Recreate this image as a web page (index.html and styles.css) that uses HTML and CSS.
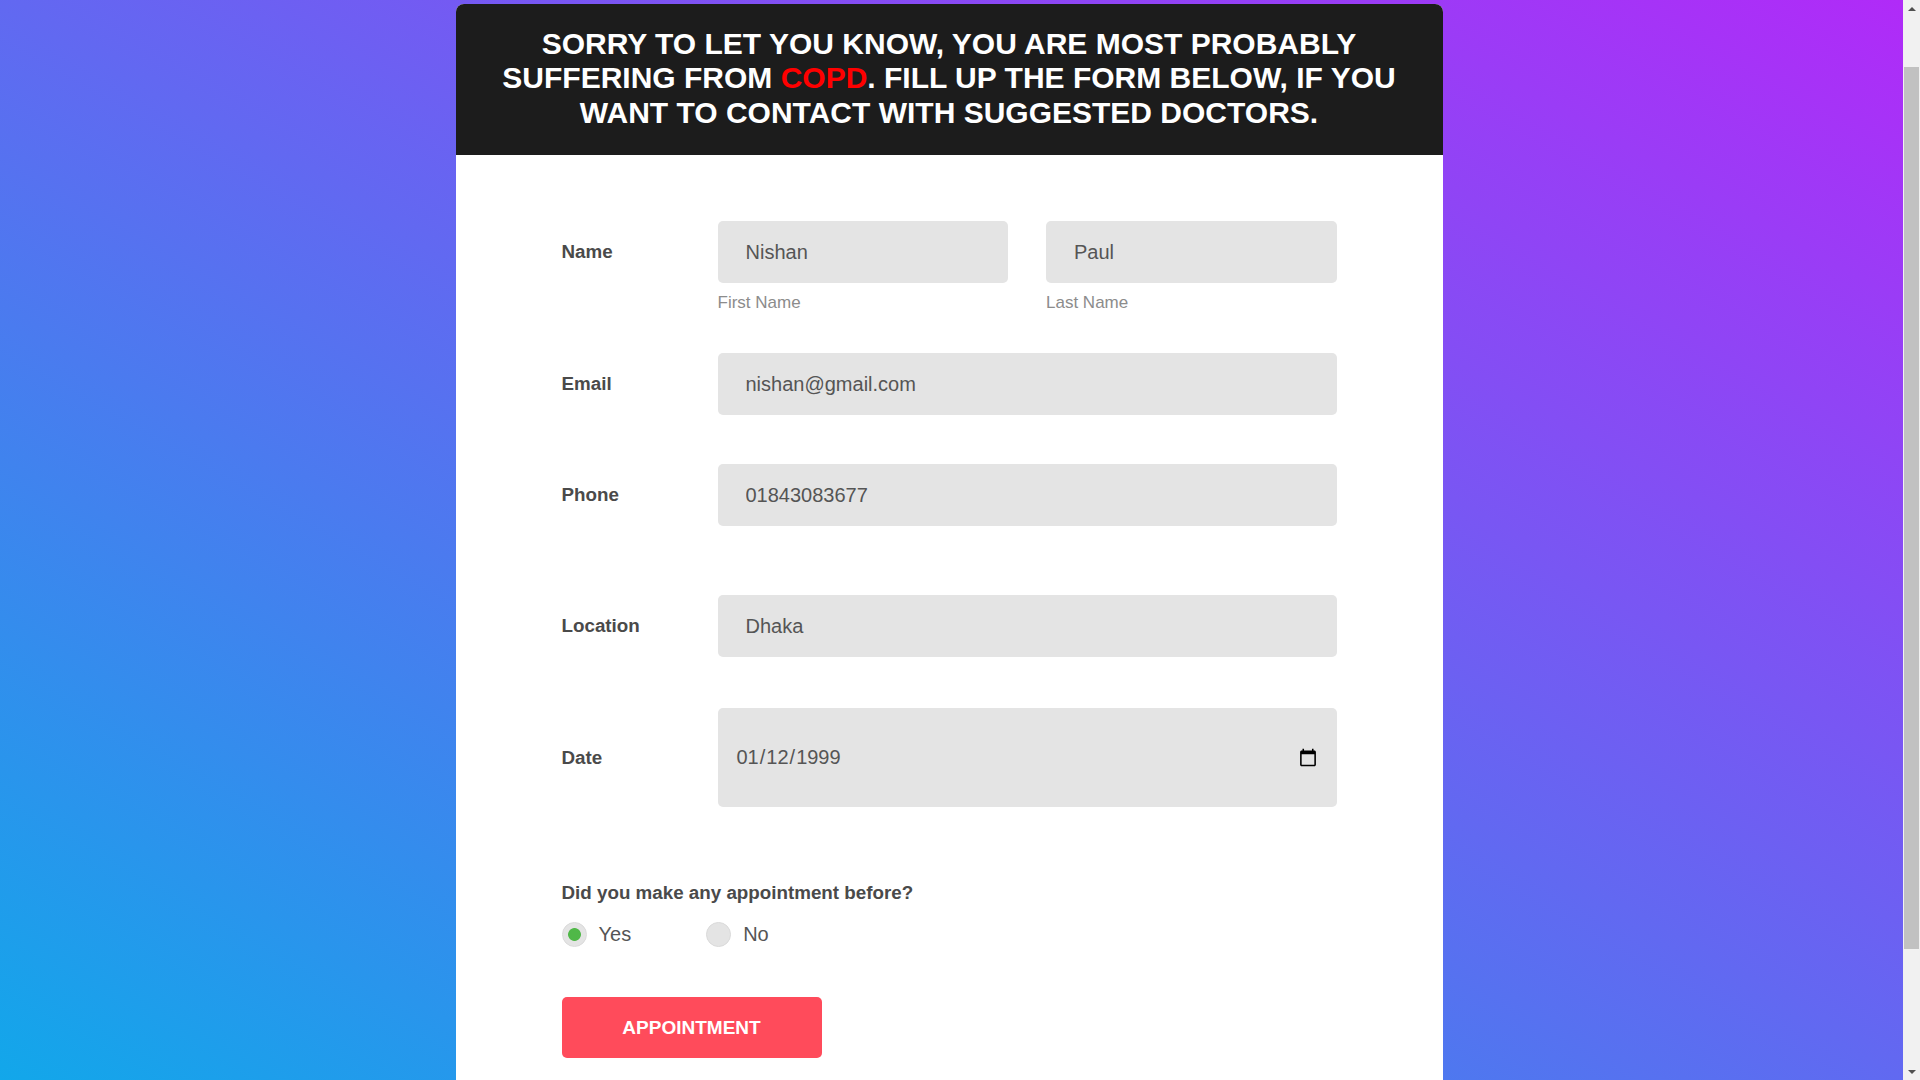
FILE: index.html
```html
<!DOCTYPE html>
<html lang="en">
<head>
<meta charset="utf-8">
<title>Appointment</title>
<link rel="stylesheet" href="styles.css">
</head>
<body>
<div class="card">
  <div class="banner">
    SORRY TO LET YOU KNOW, YOU ARE MOST PROBABLY<br>
    SUFFERING FROM <span class="disease">COPD</span>. FILL UP THE FORM BELOW, IF YOU<br>
    WANT TO CONTACT WITH SUGGESTED DOCTORS.
  </div>
  <form class="form">
    <div class="row row-top row-name">
      <label class="label">Name</label>
      <div class="fields">
        <div class="field">
          <input class="input" type="text" value="Nishan">
          <div class="hint">First Name</div>
        </div>
        <div class="field">
          <input class="input" type="text" value="Paul">
          <div class="hint">Last Name</div>
        </div>
      </div>
    </div>
    <div class="row row-email">
      <label class="label">Email</label>
      <div class="fields"><input class="input" type="text" value="nishan@gmail.com"></div>
    </div>
    <div class="row row-phone">
      <label class="label">Phone</label>
      <div class="fields"><input class="input" type="text" value="01843083677"></div>
    </div>
    <div class="row row-location">
      <label class="label">Location</label>
      <div class="fields"><input class="input" type="text" value="Dhaka"></div>
    </div>
    <div class="row row-date">
      <label class="label">Date</label>
      <div class="fields"><input class="input input-date" type="date" value="1999-01-12"></div>
    </div>
    <div class="question">Did you make any appointment before?</div>
    <div class="choices">
      <label class="choice"><input class="radio" type="radio" name="before" checked><span>Yes</span></label>
      <label class="choice"><input class="radio" type="radio" name="before"><span>No</span></label>
    </div>
    <button class="btn" type="button">APPOINTMENT</button>
  </form>
</div>
<div class="scrollbar" aria-hidden="true">
  <div class="sb-btn"><span class="arrow-up"></span></div>
  <div class="sb-track"><div class="sb-thumb"></div></div>
  <div class="sb-btn"><span class="arrow-down"></span></div>
</div>
</body>
</html>
```
FILE: styles.css
```css
html {
  min-height: 100%;
  background: linear-gradient(to top right, #12a7ea, #b12af8) fixed;
}
body {
  margin: 0 22px 0 0;
  padding: 4px 0 43px;
  font-family: "Liberation Sans", Arial, sans-serif;
}
.card {
  width: 987px;
  margin: 0 auto;
  background: #fff;
  border-radius: 8px 8px 0 0;
  overflow: hidden;
}
.banner {
  background: #1c1c1c;
  color: #fff;
  text-align: center;
  font-weight: bold;
  font-size: 30px;
  line-height: 34.4px;
  padding: 23px 10px 25px;
}
.disease {
  color: #ff0000;
}
.form {
  padding: 66px 106px 180px 106px;
}
.row {
  display: flex;
  align-items: center;
}
.row-top {
  align-items: flex-start;
}
.row-name { margin-bottom: 40px; }
.row-email { margin-bottom: 49px; }
.row-phone { margin-bottom: 69px; }
.row-location { margin-bottom: 51px; }
.row-date { margin-bottom: 75px; }
.label {
  width: 156px;
  flex: none;
  font-size: 18.8px;
  font-weight: bold;
  color: #4a4a4a;
}
.row-top .label {
  height: 62px;
  line-height: 62px;
}
.fields {
  flex: 1;
  display: flex;
  gap: 38px;
}
.field {
  flex: 1;
}
.input {
  display: block;
  width: 100%;
  box-sizing: border-box;
  height: 62px;
  border: none;
  border-radius: 5px;
  background: #e4e4e4;
  padding: 0 28px;
  font-family: "Liberation Sans", Arial, sans-serif;
  font-size: 20px;
  color: #555;
  outline: none;
}
.input-date {
  height: 99px;
  padding: 0 17px 0 18px;
}
.hint {
  margin-top: 10px;
  font-size: 17px;
  color: #8c8c8c;
}
.question {
  font-size: 18.8px;
  font-weight: bold;
  color: #4a4a4a;
}
.choices {
  display: flex;
  gap: 75px;
  margin-top: 18px;
}
.choice {
  display: flex;
  align-items: center;
  gap: 12px;
  font-size: 20px;
  color: #555;
}
.radio {
  appearance: none;
  -webkit-appearance: none;
  margin: 0;
  width: 25px;
  height: 25px;
  border-radius: 50%;
  box-sizing: border-box;
  border: 1px solid #dadada;
  background: #e4e4e4;
}
.radio:checked {
  background: radial-gradient(circle, #50b848 0 6px, #e4e4e4 6.8px);
}
.btn {
  display: block;
  margin-top: 50px;
  width: 260px;
  height: 61px;
  border: none;
  border-radius: 5px;
  background: #ff4b5b;
  color: #fff;
  font-family: "Liberation Sans", Arial, sans-serif;
  font-weight: bold;
  font-size: 19px;
}
.scrollbar {
  position: fixed;
  top: 0;
  right: 0;
  width: 17px;
  height: 100vh;
  background: #f1f1f1;
  display: flex;
  flex-direction: column;
}
.sb-btn {
  height: 17px;
  flex: none;
  display: flex;
  align-items: center;
  justify-content: center;
}
.arrow-up {
  width: 0;
  height: 0;
  border-left: 4px solid transparent;
  border-right: 4px solid transparent;
  border-bottom: 4px solid #505050;
}
.arrow-down {
  width: 0;
  height: 0;
  border-left: 4px solid transparent;
  border-right: 4px solid transparent;
  border-top: 4px solid #505050;
}
.sb-track {
  flex: 1;
  padding: 50px 1px 0;
}
.sb-thumb {
  height: 882px;
  background: #c1c1c1;
}
```
